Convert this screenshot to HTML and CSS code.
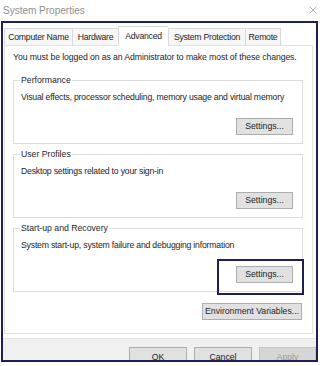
FILE: index.html
```html
<!DOCTYPE html>
<html>
<head>
<meta charset="utf-8">
<link rel="stylesheet" href="styles.css">
</head>
<body>
<div class="titlebar">
  <span class="title">System Properties</span>
  <svg class="close" width="8" height="8" viewBox="0 0 8 8"><path d="M0.5 0.5L7.5 7.5M7.5 0.5L0.5 7.5" stroke="#b5b5b5" stroke-width="1" fill="none"/></svg>
</div>
<div class="frame">
  <div class="tabs">
    <div class="tab t1">Computer Name</div>
    <div class="tab t2">Hardware</div>
    <div class="tab t3 active">Advanced</div>
    <div class="tab t4">System Protection</div>
    <div class="tab t5">Remote</div>
  </div>
  <div class="panel">
    <div class="notice">You must be logged on as an Administrator to make most of these changes.</div>
    <fieldset class="group first">
      <legend>Performance</legend>
      <div class="desc">Visual effects, processor scheduling, memory usage and virtual memory</div>
      <div class="btnrow"><button class="btn">Settings...</button></div>
    </fieldset>
    <fieldset class="group">
      <legend>User Profiles</legend>
      <div class="desc">Desktop settings related to your sign-in</div>
      <div class="btnrow"><button class="btn">Settings...</button></div>
    </fieldset>
    <fieldset class="group">
      <legend>Start-up and Recovery</legend>
      <div class="desc">System start-up, system failure and debugging information</div>
      <div class="btnrow"><span class="highlight"><button class="btn">Settings...</button></span></div>
    </fieldset>
    <div class="envrow"><button class="btn env">Environment Variables...</button></div>
  </div>
  <div class="bottombar">
    <button class="btn dlg">OK</button>
    <button class="btn dlg">Cancel</button>
    <button class="btn dlg disabled">Apply</button>
  </div>
</div>
</body>
</html>
```
FILE: styles.css
```css
* { box-sizing: border-box; }
html, body {
  margin: 0;
  padding: 0;
  background: #ffffff;
}
body {
  width: 323px;
  height: 366px;
  overflow: hidden;
  font-family: "Liberation Sans", Arial, sans-serif;
  font-size: 8.7px;
  line-height: 11px;
  color: #1e1e1e;
}
.titlebar {
  height: 21px;
  display: flex;
  align-items: center;
  justify-content: space-between;
  padding: 0 6px 1px 3px;
}
.title {
  font-size: 10px;
  color: #8e8e8e;
}
.close { display: block; margin-top: -1px; }
.frame {
  margin-left: 1px;
  width: 317px;
  height: 341px;
  border: 2px solid #1f1f58;
  background: #ffffff;
  display: flex;
  flex-direction: column;
  overflow: hidden;
}
.tabs {
  display: flex;
  padding: 5px 0 0 1px;
  height: 22px;
  align-items: flex-start;
}
.tab {
  height: 17px;
  line-height: 16px;
  border: 1px solid #d9d9d9;
  border-bottom: none;
  border-right: none;
  background: #f7f7f7;
  text-align: center;
  white-space: nowrap;
  letter-spacing: -0.25px;
}
.t1 { width: 68px; }
.t2 { width: 46px; }
.t3 { width: 50px; }
.t4 { width: 77px; }
.t5 { width: 36px; border-right: 1px solid #d9d9d9; }
.tab.active {
  background: #ffffff;
  height: 20px;
  margin-top: -2px;
  line-height: 18px;
  position: relative;
  z-index: 1;
}
.tab.active + .tab { border-left: 1px solid #d9d9d9; }
.panel {
  margin: 0 3px 4px 1px;
  flex: 1;
  border: 1px solid #e2e2e2;
  background: #ffffff;
  padding: 6px 9px 0 8px;
  display: flex;
  flex-direction: column;
}
.notice { height: 11px; white-space: nowrap; letter-spacing: -0.1px; }
.group {
  margin: 5px 0 0;
  padding: 0 9px 8px 7px;
  border: 1px solid #dcdcdc;
  min-width: 0;
}
.group.first { margin-top: 12px; }
.group legend {
  padding: 0 1px;
  margin-left: -1px;
  line-height: 11px;
}
.desc {
  margin-top: 6px;
  white-space: nowrap;
  letter-spacing: -0.2px;
}
.btnrow {
  margin-top: 15px;
  display: flex;
  justify-content: flex-end;
}
.btn {
  font-family: "Liberation Sans", Arial, sans-serif;
  font-size: 8.7px;
  color: #1e1e1e;
  background: #e1e1e1;
  border: 1px solid #adadad;
  height: 17px;
  width: 57px;
  padding: 0;
  margin: 0;
  line-height: 15px;
}
.highlight {
  position: relative;
  display: block;
}
.highlight::after {
  content: "";
  position: absolute;
  left: -19px;
  top: -7px;
  width: 83px;
  height: 32px;
  border: 2px solid #1f1f58;
}
.envrow {
  margin-top: 11px;
  display: flex;
  justify-content: flex-end;
  padding-right: 1px;
}
.btn.env { width: 100px; }
.bottombar {
  height: 22px;
  background: #f0f0f0;
  border-top: 1px solid #e4e4e4;
  display: flex;
  justify-content: flex-end;
  gap: 7px;
  padding: 8px 0 0 0;
}
.btn.dlg {
  height: 21px;
  width: 58px;
  flex: none;
}
.btn.disabled {
  color: #9a9a9a;
  background: #d6d6d6;
  border-color: #c4c4c4;
  width: 57px;
}
```
